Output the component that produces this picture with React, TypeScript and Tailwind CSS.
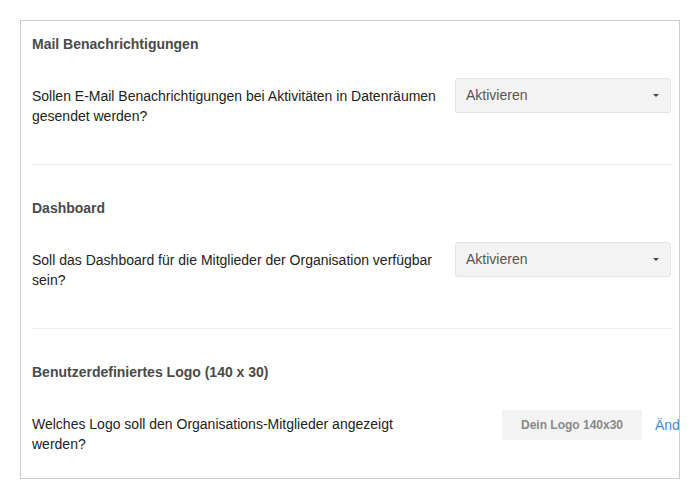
import { ReactNode } from 'react';

function SelectBox() {
    return (
        <div className="flex h-[35px] w-[216px] shrink-0 items-center justify-between rounded-[3px] border border-[#e3e3e3] bg-[#f3f3f3] pl-[10px] pr-[11px] text-[14px] text-[#555]">
            <span>Aktivieren</span>
            <span className="h-0 w-0 border-x-[3px] border-t-[3px] border-x-transparent border-t-[#444]" />
        </div>
    );
}

function Section({ title, label, control, first, last }: { title: string; label: string; control: ReactNode; first?: boolean; last?: boolean }) {
    return (
        <div className={(first ? 'pt-[13px] ' : 'pt-[33px] ') + (last ? '' : 'pb-[38px] border-b border-[#eeeeee]')}>
            <h3 className="text-[14px] font-bold leading-[20px] text-[#4a4a4a]">{title}</h3>
            <div className="mt-[24px] flex items-start">
                <p className="w-[412px] shrink-0 pt-[8px] text-[14px] leading-[20px] text-[#222]">{label}</p>
                <div className="ml-[11px]">{control}</div>
            </div>
        </div>
    );
}

export default function App() {
    return (
        <div className="min-h-[500px] bg-white pt-[20px] pl-[20px] font-['Liberation_Sans',Arial,sans-serif]">
            <div className="w-[660px] overflow-hidden border border-[#cccccc] pl-[11px] pr-[7px] pb-[24px]">
                <Section
                    first
                    title="Mail Benachrichtigungen"
                    label="Sollen E-Mail Benachrichtigungen bei Aktivitäten in Datenräumen gesendet werden?"
                    control={<SelectBox />}
                />
                <Section
                    title="Dashboard"
                    label="Soll das Dashboard für die Mitglieder der Organisation verfügbar sein?"
                    control={<SelectBox />}
                />
                <Section
                    title="Benutzerdefiniertes Logo (140 x 30)"
                    label="Welches Logo soll den Organisations-Mitglieder angezeigt werden?"
                    last
                    control={
                        <div className="flex w-[216px] items-center whitespace-nowrap pt-[4px] pl-[47px]">
                            <div className="flex h-[30px] w-[140px] shrink-0 items-center justify-center bg-[#f3f3f3] text-[12px] font-bold text-[#888]">
                                Dein Logo 140x30
                            </div>
                            <a className="ml-[13px] text-[14px] text-[#3a8fd9]">Ändern</a>
                        </div>
                    }
                />
            </div>
        </div>
    );
}
